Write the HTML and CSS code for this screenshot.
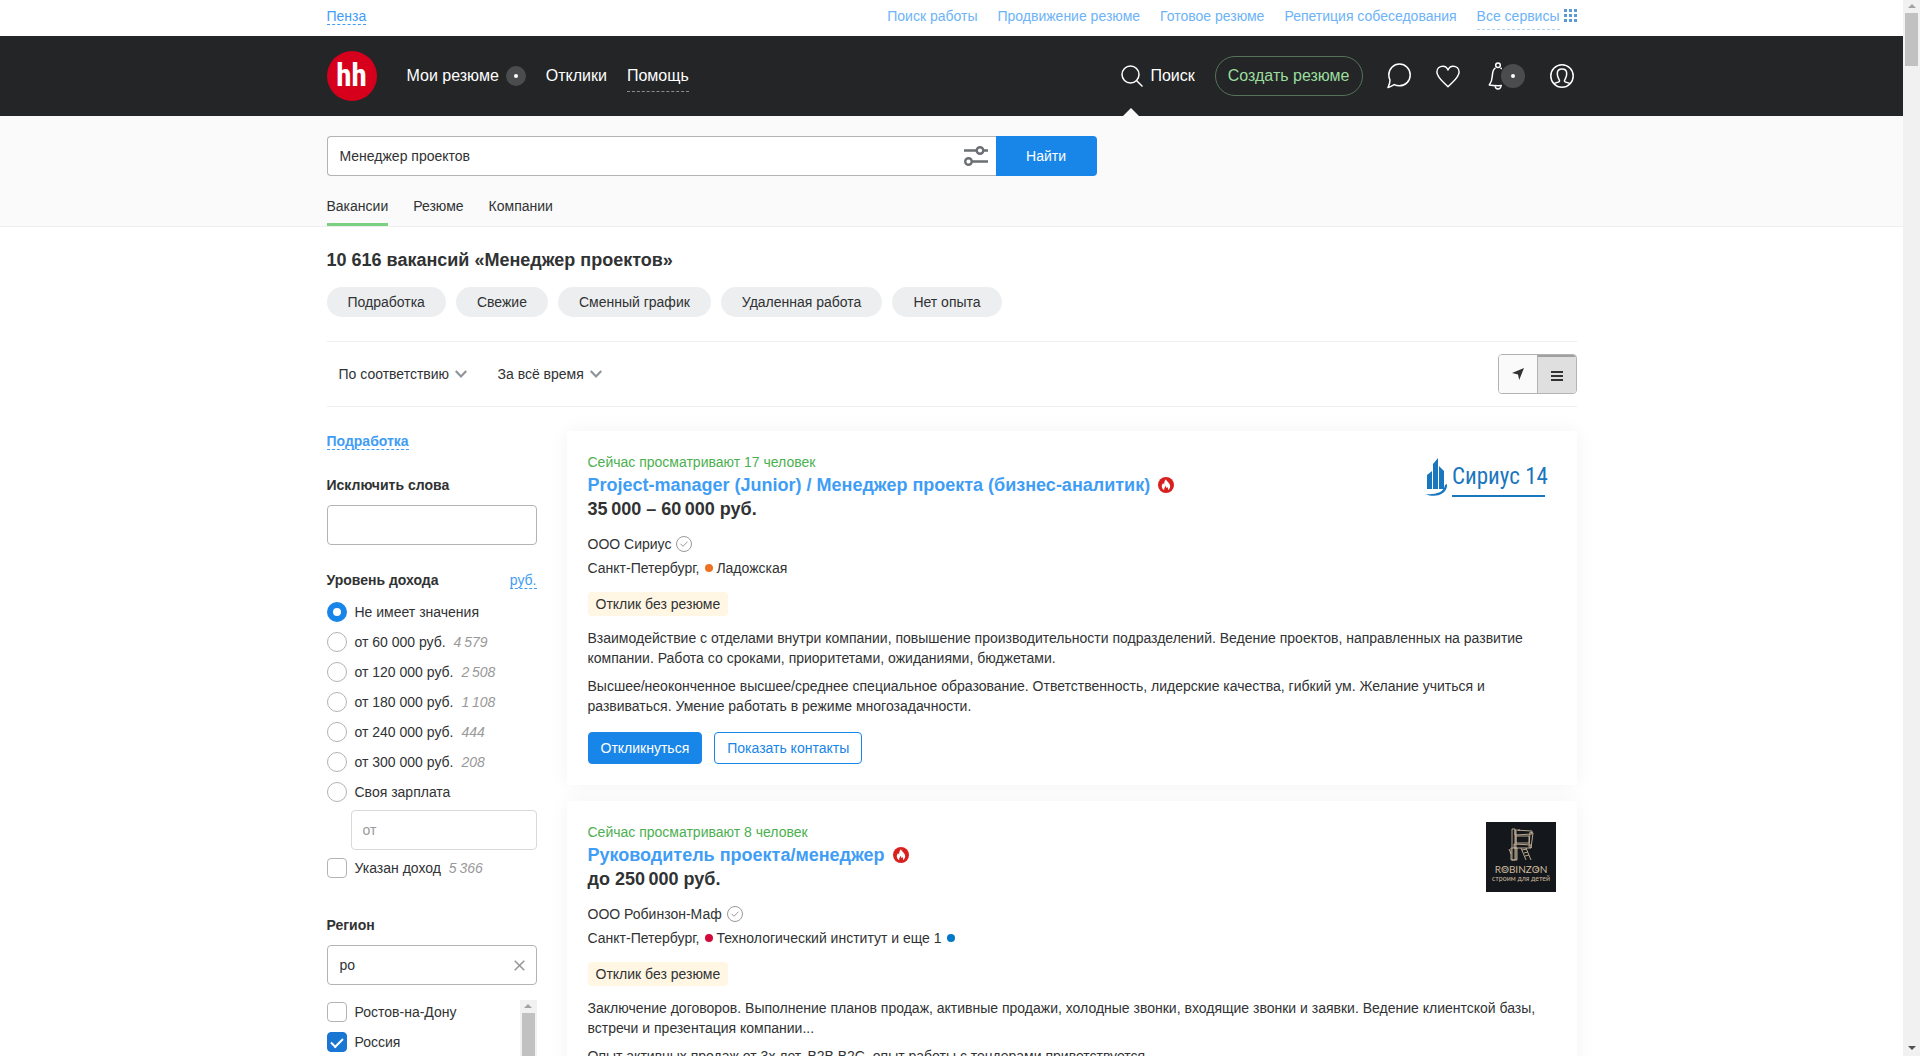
FILE: index.html
```html
<!DOCTYPE html>
<html lang="ru">
<head>
<meta charset="utf-8">
<meta name="viewport" content="width=device-width, initial-scale=1">
<title>Вакансии «Менеджер проектов»</title>
<link rel="stylesheet" href="styles.css">
</head>
<body>
<div class="viewport">
<div class="page">
  <div class="topbar">
    <div class="container topbar-row">
      <a class="region-link" href="#">Пенза</a>
      <nav class="services">
        <a href="#">Поиск работы</a>
        <a href="#">Продвижение резюме</a>
        <a href="#">Готовое резюме</a>
        <a href="#">Репетиция собеседования</a>
        <span class="all-services"><a href="#">Все сервисы</a>
          <svg width="13" height="13" viewBox="0 0 13 13" fill="#5a9bd5" shape-rendering="crispEdges"><path d="M0 0h3v3H0zM5 0h3v3H5zM10 0h3v3h-3zM0 5h3v3H0zM5 5h3v3H5zM10 5h3v3h-3zM0 10h3v3H0zM5 10h3v3H5zM10 10h3v3h-3z"/></svg>
        </span>
      </nav>
    </div>
  </div>

  <header class="header">
    <div class="container header-row">
      <a class="logo" href="#">hh</a>
      <nav class="main-nav">
        <a href="#" class="with-badge">Мои резюме <span class="badge"></span></a>
        <a href="#">Отклики</a>
        <a href="#" class="help">Помощь</a>
      </nav>
      <div class="header-tools">
        <a href="#" class="search-link">
          <svg width="22" height="22" viewBox="0 0 22 22" fill="none" stroke="#fff" stroke-width="1.5"><circle cx="9.500" cy="9.500" r="8.500"/><path d="M15.500 15.500l6 6"/></svg>
          Поиск
        </a>
        <a href="#" class="create">Создать резюме</a>
        <div class="icons">
          <a href="#" aria-label="Чат"><svg width="24" height="26" viewBox="0 0 24 26" fill="none" stroke="#fff" stroke-width="1.500" stroke-linejoin="round"><path d="M1 24.500c1-2 2-4.500 2-7.500-.8-1.500-1.200-3-1.200-5C1.800 6 6.500 1 12.500 1S23.200 6 23.200 12s-4.700 10.800-10.700 10.800c-2 0-3.800-.4-5.300-1.200-2 1.200-4 2.200-6.200 2.900z"/></svg></a>
          <a href="#" aria-label="Избранное"><svg width="24" height="24" viewBox="0 0 24 24" fill="none" stroke="#fff" stroke-width="1.500" stroke-linejoin="round"><path d="M12 6C11 3.500 9.300 2.200 7 2.200 3.500 2.200.9 4.600.9 8c0 5.500 6 9.500 11.100 14.800C17.100 17.500 23.100 13.500 23.100 8c0-3.400-2.600-5.800-6.100-5.800-2.300 0-4 1.300-5 3.800z"/></svg></a>
          <a href="#" aria-label="Уведомления" class="bell"><svg width="14" height="28" viewBox="0 0 14 28" fill="none" stroke="#fff" stroke-width="1.500" stroke-linejoin="round"><circle cx="10" cy="3.200" r="2.300"/><path d="M7.500 5.800C4.800 7.200 4.500 10 4.300 14c-.2 4-1 6.500-3 9 4 .9 13.400.9 17.400 0M7 24c.3 2 1.500 3 3 3s2.700-1 3-3M12.500 5.800l1.500 1"/></svg><span class="badge badge-large"></span></a>
          <a href="#" aria-label="Профиль"><svg width="24" height="24" viewBox="0 0 24 24" fill="none" stroke="#fff" stroke-width="1.500"><circle cx="12" cy="12" r="11.200"/><path d="M4 19.700c1.500-1.200 4-1 5.300-2.200.7-.8-.1-1.900-.8-3.200C7.800 13 7.300 11.200 7.300 9.500 7.300 6.500 9 5 12 5s4.700 1.500 4.700 4.500c0 1.700-.5 3.500-1.200 4.800-.7 1.300-1.500 2.400-.8 3.200 1.300 1.200 3.800 1 5.300 2.200"/></svg></a>
        </div>
      </div>
    </div>
  </header>

  <section class="search-panel">
    <div class="container">
      <form class="search-form">
        <div class="search-box">
          <input type="text" aria-label="Поиск вакансий" value="Менеджер проектов">
          <button type="button" class="tune" aria-label="Расширенный поиск"><svg width="24" height="20" viewBox="0 0 24 20" fill="none" stroke="#6b6f73" stroke-width="2.400"><path d="M0 4.500h13M19.500 4.500H24M8 15.500h16"/><circle cx="16" cy="4.500" r="3.300"/><circle cx="4.500" cy="15.500" r="3.300"/></svg></button>
        </div>
        <button type="button" class="find">Найти</button>
      </form>
      <nav class="tabs">
        <a href="#" class="active">Вакансии</a>
        <a href="#">Резюме</a>
        <a href="#">Компании</a>
      </nav>
    </div>
  </section>

  <main class="container">
    <h1>10 616 вакансий «Менеджер проектов»</h1>
    <div class="chips">
      <button type="button">Подработка</button>
      <button type="button">Свежие</button>
      <button type="button">Сменный график</button>
      <button type="button">Удаленная работа</button>
      <button type="button">Нет опыта</button>
    </div>

    <div class="sorting">
      <div class="dropdown">
        <select aria-label="Сортировка"><option>По соответствию</option></select>
        <svg width="12" height="8" viewBox="0 0 12 8" fill="none" stroke="#8e939c" stroke-width="2.200"><path d="M.8 1L6 6.400 11.200 1"/></svg>
      </div>
      <div class="dropdown">
        <select aria-label="Период"><option>За всё время</option></select>
        <svg width="12" height="8" viewBox="0 0 12 8" fill="none" stroke="#8e939c" stroke-width="2.200"><path d="M.8 1L6 6.400 11.200 1"/></svg>
      </div>
      <div class="view-switch">
        <button type="button" aria-label="На карте"><svg width="12" height="12" viewBox="0 0 12 12" fill="#303233"><path d="M12 0L7.200 12 6 6.600 0 5z"/></svg></button>
        <button type="button" class="pressed" aria-label="Списком"><svg width="12" height="10" viewBox="0 0 12 10" fill="#303233" shape-rendering="crispEdges"><path d="M0 0h12v2H0zM0 4h12v2H0zM0 8h12v2H0z"/></svg></button>
      </div>
    </div>

    <div class="content">
      <aside class="filters">
        <a class="quick" href="#">Подработка</a>

        <div class="filter">
          <label class="filter-title" for="exclude">Исключить слова</label>
          <input class="field" id="exclude" type="text">
        </div>

        <div class="filter">
          <div class="filter-head"><h2 class="filter-title">Уровень дохода</h2><a class="currency" href="#">руб.</a></div>
          <div class="options">
            <label><input type="radio" name="income" checked>Не имеет значения</label>
            <label><input type="radio" name="income">от 60 000 руб. <i>4&thinsp;579</i></label>
            <label><input type="radio" name="income">от 120 000 руб. <i>2&thinsp;508</i></label>
            <label><input type="radio" name="income">от 180 000 руб. <i>1&thinsp;108</i></label>
            <label><input type="radio" name="income">от 240 000 руб. <i>444</i></label>
            <label><input type="radio" name="income">от 300 000 руб. <i>208</i></label>
            <label><input type="radio" name="income">Своя зарплата</label>
          </div>
          <input class="field own-income" type="text" placeholder="от" aria-label="Своя зарплата от">
          <div class="options"><label><input type="checkbox">Указан доход <i>5&thinsp;366</i></label></div>
        </div>

        <div class="filter filter-region">
          <label class="filter-title" for="region">Регион</label>
          <div class="field clearable">
            <input id="region" type="text" value="ро">
            <button type="button" aria-label="Очистить"><svg width="11" height="11" viewBox="0 0 11 11" fill="none" stroke="#999" stroke-width="1.600"><path d="M.7.700l9.600 9.600M10.300.7L.7 10.300"/></svg></button>
          </div>
          <div class="region-list">
            <div class="options">
              <label><input type="checkbox">Ростов-на-Дону</label>
              <label><input type="checkbox" checked>Россия</label>
            </div>
            <div class="scrollbar"><span class="arrow-up"></span><span class="thumb thumb-list"></span></div>
          </div>
        </div>
      </aside>

      <div class="vacancies">
        <article class="card">
          <div class="card-head">
            <div>
              <p class="viewers">Сейчас просматривают 17 человек</p>
              <h3><a href="#">Project-manager (Junior) / Менеджер проекта (бизнес-аналитик)</a>
                <svg width="16" height="16" viewBox="0 0 16 16"><circle cx="8" cy="8" r="8" fill="#d8201f"/><path d="M8 2.200c.4 2.200 4.200 3.700 4.200 7 0 1.800-.9 3.100-2.300 3.900.4-1.200.2-2.200-.7-3-.3.600-.5.900-.9 1.100 0-1-.3-1.700-1-2.400.1 1.700-1.600 2.500-1.100 4.300C4.700 12.300 3.800 11 3.800 9.200c0-1.400.6-2.400 1.500-3.300.1.700.3 1.200.8 1.600C6.100 5.300 6.700 3.500 8 2.200z" fill="#fff"/></svg></h3>
              <p class="salary">35&thinsp;000 – 60&thinsp;000 руб.</p>
            </div>
            <svg class="logo-sirius" width="124" height="42" viewBox="0 0 124 42" fill="#1a76bd"><path d="M2 18l5-4v18H2zM8 7l5-6v31H8zM14 9l5 5v18h-5z"/><path d="M0 37c9 1 19-1 20-9l2-1c1 9-10 15-22 10z"/><text class="sirius-text" x="27" y="27">Сириус 14</text><path d="M27 38h93v2H27z"/></svg>
          </div>
          <p class="company">ООО Сириус <svg width="16" height="16" viewBox="0 0 16 16" fill="none" stroke="#999"><circle cx="8" cy="8" r="7.500"/><path d="M4.500 7.800L7 10.300l4.500-4.600"/></svg></p>
          <p class="place">Санкт-Петербург, <span class="metro metro-orange"></span>Ладожская</p>
          <span class="tag">Отклик без резюме</span>
          <p class="snippet">Взаимодействие с отделами внутри компании, повышение производительности подразделений. Ведение проектов, направленных на развитие компании. Работа со сроками, приоритетами, ожиданиями, бюджетами.</p>
          <p class="snippet">Высшее/неоконченное высшее/среднее специальное образование. Ответственность, лидерские качества, гибкий ум. Желание учиться и развиваться. Умение работать в режиме многозадачности.</p>
          <div class="actions">
            <button type="button" class="primary">Откликнуться</button>
            <button type="button" class="secondary">Показать контакты</button>
          </div>
        </article>

        <article class="card">
          <div class="card-head">
            <div>
              <p class="viewers">Сейчас просматривают 8 человек</p>
              <h3><a href="#">Руководитель проекта/менеджер</a>
                <svg width="16" height="16" viewBox="0 0 16 16"><circle cx="8" cy="8" r="8" fill="#d8201f"/><path d="M8 2.200c.4 2.200 4.200 3.700 4.200 7 0 1.800-.9 3.100-2.300 3.900.4-1.200.2-2.200-.7-3-.3.600-.5.900-.9 1.100 0-1-.3-1.700-1-2.400.1 1.700-1.600 2.500-1.100 4.300C4.700 12.300 3.800 11 3.800 9.200c0-1.400.6-2.400 1.500-3.300.1.700.3 1.200.8 1.600C6.100 5.300 6.700 3.500 8 2.200z" fill="#fff"/></svg></h3>
              <p class="salary">до 250&thinsp;000 руб.</p>
            </div>
            <svg class="logo-robinzon" width="70" height="70" viewBox="0 0 70 70"><path d="M0 0h70v70H0z" fill="#14171b"/><g fill="none" stroke="#c9b79c" stroke-width=".9"><path d="M26 7h3v31h-3zM30 9v29M29 8l17 1v3l-17 1zM44 10l3 1-2 15-2-1zM28 22l17 1v3H28zM30 14h13v7H30zM35 26l5 12M40 26l5 12M36 28l5-1M38 31l4-1M39 34l4-1M25 38h6V26h-6zM25 32l-2-5M33 9v-2"/></g><g fill="#cdbb9f" text-anchor="middle"><text class="robinzon-name" x="35" y="51">ROBINZON</text><text class="robinzon-slogan" x="35" y="59">строим для детей</text></g><g fill="none" stroke="#cdbb9f" stroke-width=".7"><circle cx="19" cy="47.500" r="1.500"/><circle cx="51" cy="47.500" r="1.500"/></g></svg>
          </div>
          <p class="company">ООО Робинзон-Маф <svg width="16" height="16" viewBox="0 0 16 16" fill="none" stroke="#999"><circle cx="8" cy="8" r="7.500"/><path d="M4.500 7.800L7 10.300l4.500-4.600"/></svg></p>
          <p class="place">Санкт-Петербург, <span class="metro metro-red"></span>Технологический институт и еще 1 <span class="metro metro-blue"></span></p>
          <span class="tag">Отклик без резюме</span>
          <p class="snippet">Заключение договоров. Выполнение планов продаж, активные продажи, холодные звонки, входящие звонки и заявки. Ведение клиентской базы, встречи и презентация компании...</p>
          <p class="snippet">Опыт активных продаж от 3х лет. B2B B2C, опыт работы с тендерами приветствуется.</p>
          <div class="actions">
            <button type="button" class="primary">Откликнуться</button>
            <button type="button" class="secondary">Показать контакты</button>
          </div>
        </article>
      </div>
    </div>
  </main>
</div>
<div class="scrollbar"><span class="arrow-up"></span><span class="thumb"></span><span class="arrow-down"></span></div>
</div>
</body>
</html>
```
FILE: styles.css
```css
* { box-sizing: border-box; }

body {
  margin: 0;
  background: #fff;
  color: #303233;
  font: 14px/20px "Liberation Sans", Arial, sans-serif;
}

h1, h2, h3, p { margin: 0; }
a { color: inherit; text-decoration: none; }
button, input, select { font: inherit; color: inherit; margin: 0; }
button { cursor: pointer; border: 0; padding: 0; background: none; }
svg { display: block; flex: none; }

/* Scrolling page with its own scrollbar column */
.viewport { display: grid; grid-template-columns: minmax(0, 1fr) 17px; height: 100vh; }
.page { overflow-x: hidden; overflow-y: auto; scrollbar-width: none; }
.scrollbar { display: flex; flex-direction: column; align-items: center; background: #f1f1f1; width: 17px; padding: 3px 0 6px; }
.arrow-up, .arrow-down { border: 4px solid transparent; border-top: 0; border-bottom-color: #a3a3a3; }
.arrow-up { margin: 1px 0 5px; }
.arrow-down { border-top: 4px solid #505050; border-bottom: 0; margin-top: auto; }
.thumb { width: 13px; height: 53px; background: #c1c1c1; }
.thumb-list { flex: 1; }

.container { max-width: 1250px; margin: 0 auto; }

/* Top bar */
.topbar-row { display: flex; justify-content: space-between; height: 36px; }
.region-link { color: #3f9df5; border-bottom: 1px dashed; height: 19px; margin-top: 6px; }
.services { display: flex; gap: 20px; color: #6db3f7; padding-top: 6px; }
.all-services { display: flex; gap: 4px; }
.all-services a { border-bottom: 1px dashed #b0d2ef; height: 24px; }
.all-services svg { margin-top: 3px; }

/* Header */
.header { background: #232527; color: #fff; font-size: 16px; }
.header-row { display: flex; align-items: center; height: 80px; }
.logo { width: 50px; height: 50px; border-radius: 50%; background: #d6001c; font: bold 31px/50px "Roboto Condensed", "Liberation Sans Narrow", Roboto, sans-serif; text-align: center; }
.main-nav { display: flex; gap: 20px; margin-left: 30px; line-height: 32px; }
.main-nav a { height: 32px; }
.with-badge { display: flex; align-items: center; gap: 7px; }
.help { border-bottom: 1px dashed #8c8d8e; }
.badge { display: flex; align-items: center; justify-content: center; width: 20px; height: 20px; border-radius: 50%; background: #4b4c4e; }
.badge::after { content: ""; width: 4px; height: 4px; border-radius: 50%; background: #fff; }
.badge-large { width: 24px; height: 24px; margin-left: -1px; }
.header-tools { display: flex; align-items: center; margin-left: auto; height: 80px; }
.search-link { display: flex; align-items: center; gap: 7px; height: 80px; position: relative; margin-right: 20px; }
.search-link::after { content: ""; position: absolute; left: 2px; bottom: 0; border: 8px solid transparent; border-top: 0; border-bottom-color: #fafafa; }
.create { color: #9cdd9e; border: 1px solid #56735a; border-radius: 20px; height: 40px; line-height: 38px; padding: 0 12px; }
.icons { display: flex; align-items: center; gap: 25px; margin: 0 3px 0 24px; }
.bell { display: flex; align-items: center; margin-left: 3px; }

/* Search */
.search-panel { background: #fafafa; border-bottom: 1px solid #eeefef; padding-top: 20px; }
.search-form { display: flex; max-width: 770px; height: 40px; }
.search-box { display: flex; flex: 1; border: 1px solid #b3b3b3; border-right: 0; border-radius: 4px 0 0 4px; background: #fff; }
.search-box input { flex: 1; border: 0; background: none; outline: 0; padding: 0 12px; }
.tune { width: 40px; display: flex; align-items: center; justify-content: center; }
.find { width: 101px; background: #1885e8; color: #fff; border-radius: 0 4px 4px 0; }
.tabs { display: flex; gap: 25px; margin-top: 20px; }
.tabs a { height: 30px; border-bottom: 3px solid transparent; }
.tabs .active { border-color: #7bcf80; }

/* Results heading */
h1 { font-size: 18px; line-height: 24px; margin-top: 21px; }
.chips { display: flex; gap: 10px; margin: 15px 0 24px; }
.chips button { height: 30px; padding: 0 21px; border-radius: 15px; background: #eceef0; }
.sorting { display: flex; align-items: center; gap: 31px; height: 66px; padding-left: 12px; border: solid #eeefef; border-width: 1px 0; }
.dropdown { display: flex; align-items: center; gap: 5px; }
.dropdown select { appearance: none; border: 0; background: none; padding: 0; outline: 0; }
.view-switch { display: flex; margin-left: auto; border: 1px solid #b3b3b3; border-radius: 4px; overflow: hidden; }
.view-switch button { display: flex; align-items: center; justify-content: center; width: 38px; height: 38px; background: #fafafa; }
.view-switch .pressed { width: 39px; background: #dfdfdf; border-left: 1px solid #b3b3b3; border-top: 2px solid #a0a0a0; padding-top: 2px; }

.content { display: grid; grid-template-columns: 210px minmax(0, 1fr); gap: 30px; padding-top: 24px; }

/* Filters */
.quick { display: inline-block; font-weight: bold; color: #3f9df5; border-bottom: 1px dashed; height: 19px; }
.filter { margin-bottom: 25px; }
.quick + .filter { margin-top: 24px; }
.filter-title { display: block; font-size: 14px; font-weight: bold; line-height: 20px; }
.filter-head { display: flex; justify-content: space-between; margin-bottom: 12px; }
.currency { color: #3f9df5; border-bottom: 1px dashed; height: 19px; }
.field { display: block; width: 100%; height: 40px; margin-top: 10px; border: 1px solid #b3b3b3; border-radius: 4px; background: #fff; padding: 0 11px 0 12px; outline: 0; }
.own-income { margin: 8px 0 8px 24px; width: calc(100% - 24px); padding: 0 11px; border-color: #d9d9d9; }
.own-income::placeholder { color: #999; opacity: 1; }
.options { display: grid; gap: 10px; align-content: start; flex: 1; }
.options label { display: flex; align-items: center; height: 20px; white-space: pre; }
.options i { color: #999; margin-left: 4px; }
.options input { appearance: none; width: 20px; height: 20px; margin-right: 8px; border: 1px solid #b3b3b3; background: #fff; flex: none; }
.options input[type="radio"] { border-radius: 50%; }
.options input[type="radio"]:checked { border: 6px solid #1885e8; }
.options input[type="checkbox"] { border-radius: 4px; }
.options input[type="checkbox"]:checked { display: flex; justify-content: center; background: #1976d2; border-color: #1976d2; }
.options input[type="checkbox"]:checked::after { content: ""; width: 10px; height: 5px; margin-top: 5px; border: solid #fff; border-width: 0 0 2px 2px; transform: rotate(-45deg); }
.filter-region { padding-top: 12px; }
.clearable { display: flex; }
.clearable input { flex: 1; min-width: 0; border: 0; padding: 0; outline: 0; background: none; }
.region-list { display: flex; height: 200px; margin-top: 15px; overflow: hidden; }
.region-list .options { padding-top: 2px; }

/* Vacancy cards */
.vacancies { display: grid; gap: 16px; align-content: start; padding-bottom: 40px; }
.card { padding: 21px; border-radius: 4px; background: #fff; box-shadow: 0 0 20px rgba(0, 30, 50, 0.05); }
.card-head { display: flex; justify-content: space-between; height: 69px; }
.viewers { color: #4bb04f; }
h3 { display: flex; align-items: center; gap: 8px; margin-top: 1px; font-size: 18px; line-height: 24px; color: #3f9df5; }
.salary { font-size: 18px; font-weight: bold; line-height: 24px; }
.logo-sirius { margin: 5px 7px 0 0; }
.sirius-text { font: 23px "Liberation Sans Narrow", "Roboto Condensed", sans-serif; }
.robinzon-name { font: 10px Lato, sans-serif; }
.robinzon-slogan { font: 7px Lato, sans-serif; }
.company { display: flex; align-items: center; gap: 5px; margin-top: 11px; line-height: 24px; }
.place { line-height: 24px; margin-bottom: 12px; }
.metro { display: inline-block; width: 8px; height: 8px; margin: 0 3px 1px 2px; border-radius: 50%; }
.metro-orange { background: #ee7224; }
.metro-red { background: #d6083b; }
.metro-blue { background: #0078c9; }
.tag { display: inline-block; height: 24px; line-height: 24px; padding: 0 8px; border-radius: 4px; background: #fff7e3; vertical-align: top; }
.snippet { margin-top: 8px; }
.tag + .snippet { margin-top: 12px; }
.actions { display: flex; gap: 12px; margin-top: 16px; }
.actions button { height: 32px; border-radius: 4px; border: 1px solid #1885e8; padding: 0 12px; }
.actions .primary { background: #1885e8; color: #fff; }
.actions .secondary { background: #fff; color: #1885e8; }
```
